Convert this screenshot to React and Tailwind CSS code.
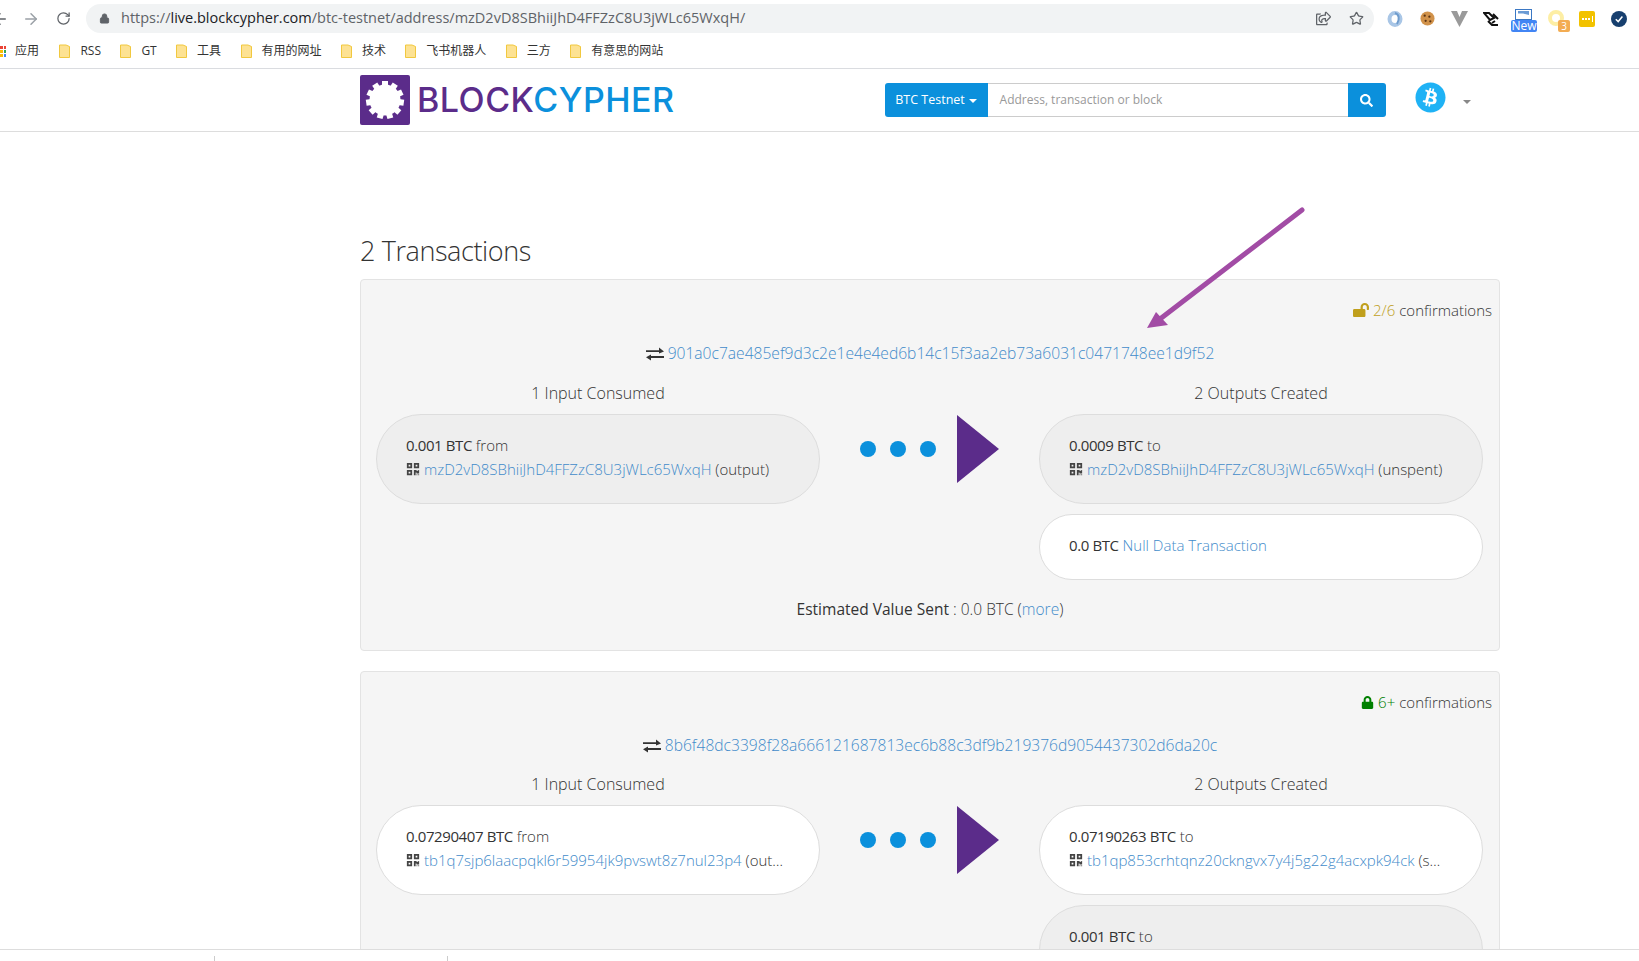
import { ArrowLeft, ArrowRight, RotateCw, Lock, Star } from 'lucide-react';
import { FaBitcoin, FaSearch, FaQrcode, FaLock, FaLockOpen, FaRegShareSquare } from 'react-icons/fa';

const FONT = { fontFamily: '"Open Sans", "Noto Sans CJK SC", sans-serif' };

const bookmarks = ['RSS', 'GT', '工具', '有用的网址', '技术', '飞书机器人', '三方', '有意思的网站'];

function Folder() {
  return (
    <svg width="11" height="14" viewBox="0 0 11 14">
      <path d="M0.5 1 H7 L10.5 2.5 V13.5 H0.5 Z" fill="#fde293" stroke="#f1c83f" />
    </svg>
  );
}

function Gear() {
  const teeth = [0, 1, 2, 3, 4, 5, 6, 7, 8, 9, 10];
  return (
    <svg width="50" height="50" viewBox="0 0 50 50" className="shrink-0">
      <rect width="50" height="50" rx="2" fill="#5b2c8a" />
      <circle cx="25" cy="25" r="15.5" fill="#fff" />
      {teeth.map(i => (
        <rect key={i} x="22" y="6" width="6" height="9" fill="#fff" transform={`rotate(${(i * 360) / 11} 25 25)`} />
      ))}
    </svg>
  );
}

function TransferIcon() {
  return (
    <svg width="18" height="14" viewBox="0 0 18 14" className="shrink-0">
      <path d="M0 3.2 H13 V0.6 L18 4.4 L13 6.6 V5 H0 Z" fill="#333" />
      <path d="M18 9 H5 V7.4 L0 10.2 L5 13.6 V11 H18 Z" fill="#333" />
    </svg>
  );
}

function Extensions() {
  return (
    <div className="flex items-center h-full">
      <div className="w-8 flex justify-center">
        <svg width="16" height="16" viewBox="0 0 16 16">
          <ellipse cx="8" cy="8" rx="5.5" ry="6" fill="none" stroke="#a9c6e6" strokeWidth="4" />
          <path d="M8 2 C12 3 13 8 10 13" fill="none" stroke="#6f9ccd" strokeWidth="2" />
        </svg>
      </div>
      <div className="w-8 flex justify-center">
        <svg width="15" height="15" viewBox="0 0 16 16">
          <circle cx="8" cy="8" r="7.5" fill="#d1924a" />
          <circle cx="5" cy="5" r="1.2" fill="#5b3413" />
          <circle cx="10" cy="6" r="1.2" fill="#5b3413" />
          <circle cx="6" cy="10.5" r="1.2" fill="#5b3413" />
          <circle cx="11" cy="11" r="1.2" fill="#5b3413" />
        </svg>
      </div>
      <div className="w-8 flex justify-center">
        <svg width="17" height="16" viewBox="0 0 17 16">
          <path d="M0 0 H6 L8.5 6 L11 0 H17 L8.5 16 Z" fill="#9a9a9a" />
        </svg>
      </div>
      <div className="w-8 flex justify-center">
        <svg width="16" height="14" viewBox="0 0 16 14" fill="none" stroke="#111" strokeWidth="2">
          <path d="M1 1 H6 L11 6 L7 8 Z M5 9 L9 13 H15 M10 2 L15 7 M12 9 L9 11" />
        </svg>
      </div>
      <div className="w-8 h-full flex justify-center relative">
        <svg width="17" height="11" viewBox="0 0 17 11" className="mt-[9px]">
          <rect x="0.5" y="0.5" width="16" height="10" fill="#fff" stroke="#3b78c4" />
          <path d="M3 2 H14 V6 L8 4.5 H3 Z" fill="#6a9bd4" />
        </svg>
        <span className="absolute left-[4px] top-[20px] w-[26px] h-[12px] rounded-[2px] bg-[#4285f4] text-white text-[12px] leading-[12px] text-center">New</span>
      </div>
      <div className="w-8 h-full relative">
        <div className="absolute left-[9px] top-[10px] w-4 h-4 rounded-full border-[4px] border-[#fdeea4]" />
        <span className="absolute left-[19px] top-[20px] w-3 h-3 rounded-[2px] bg-[#f3ac52] text-white text-[10px] leading-[12px] text-center">3</span>
      </div>
      <div className="w-8 flex justify-center">
        <div className="w-4 h-4 rounded-[2px] bg-[#f2c200] flex items-center justify-center gap-[1px]">
          <span className="w-[2px] h-[2px] bg-white" />
          <span className="w-[2px] h-[2px] bg-white" />
          <span className="w-[2px] h-[2px] bg-white" />
          <span className="w-[1px] h-[6px] ml-[1px] bg-white" />
        </div>
      </div>
      <div className="w-8 flex justify-center">
        <svg width="16" height="16" viewBox="0 0 16 16">
          <circle cx="8" cy="8" r="8" fill="#173f6e" />
          <path d="M4.8 8.2 L7.2 10.6 L11.4 5.6" fill="none" stroke="#fff" strokeWidth="1.5" />
        </svg>
      </div>
    </div>
  );
}

function BrowserChrome() {
  return (
    <div className="h-[69px] shrink-0 border-b border-[#dadce0] bg-white">
      <div className="h-[37px] flex items-center">
        <div className="w-[86px] shrink-0 relative h-full flex items-center">
          <ArrowLeft size={18} className="-ml-[9px] text-[#5f6368]" />
          <ArrowRight size={18} className="ml-[13px] text-[#9aa0a6]" />
          <RotateCw size={15} className="ml-[16px] text-[#5f6368]" />
        </div>
        <div className="w-[1288px] h-[29px] shrink-0 rounded-full bg-[#f1f3f4] flex items-center pl-[13px] pr-[10px]">
          <Lock size={11} className="text-[#5f6368] mr-[11px] fill-[#5f6368]" />
          <span className="text-[14.5px] text-[#202124] leading-none">
            <span className="text-[#5f6368]">https://</span>live.blockcypher.com<span className="text-[#5f6368]">/btc-testnet/address/mzD2vD8SBhiiJhD4FFZzC8U3jWLc65WxqH/</span>
          </span>
          <FaRegShareSquare size={15} className="ml-auto text-[#5f6368]" />
          <Star size={15} className="ml-[18px] text-[#5f6368]" />
        </div>
        <div className="ml-[5px] h-full">
          <Extensions />
        </div>
      </div>
      <div className="h-[28px] flex items-center text-[12px] text-[#333] overflow-hidden">
        <div className="flex items-center">
          <div className="w-[6px] h-[11px] mr-[9px] grid grid-cols-2 gap-[1px]">
            <span className="bg-[#ea4335]" />
            <span className="bg-[#ea4335]" />
            <span className="bg-[#fbbc04]" />
            <span className="bg-[#34a853]" />
            <span className="bg-[#fbbc04]" />
            <span className="bg-[#4285f4]" />
          </div>
          <span className="mr-[1px]">应用</span>
        </div>
        {bookmarks.map(b => (
          <div key={b} className="flex items-center gap-[10px] ml-[19.4px]">
            <Folder />
            <span>{b}</span>
          </div>
        ))}
      </div>
    </div>
  );
}

function SiteHeader() {
  return (
    <div className="h-[63px] shrink-0 border-b border-[#ddd] flex items-center pl-[360px]">
      <Gear />
      <div className="ml-[7px] text-[34px] font-medium leading-none tracking-[0.5px]" style={{ fontFamily: 'Inter, sans-serif' }}>
        <span className="text-[#5b2c8a]">BLOCK</span>
        <span className="text-[#0b90dc]">CYPHER</span>
      </div>
      <div className="ml-[210px] flex h-[34px] w-[501px]">
        <button className="w-[103px] rounded-l-[3px] bg-[#0b90dc] text-white text-[12.5px] flex items-center justify-center gap-[4px]">
          BTC Testnet
          <span className="border-x-[4px] border-t-[4px] border-x-transparent border-t-white mt-[1px]" />
        </button>
        <div className="flex-1 border-y border-[#ccc] pl-[12px] flex items-center text-[12px] text-[#999]">Address, transaction or block</div>
        <button className="w-[38px] rounded-r-[3px] bg-[#0b90dc] text-white flex items-center justify-center">
          <FaSearch size={13} />
        </button>
      </div>
      <FaBitcoin size={31} className="ml-[29px] -mt-[5px] text-[#1fb2f5]" />
      <span className="ml-[17px] mt-[3px] border-x-[4px] border-t-[4px] border-x-transparent border-t-[#888]" />
    </div>
  );
}

function Pill({ amount, word, address, note, link, active }) {
  return (
    <div className={`rounded-[45px] border border-[#ddd] pl-[29px] pr-[34px] pt-[18px] pb-[22px] text-[15px] leading-[24px] ${active ? 'bg-[#eee]' : 'bg-white'}`}>
      <div className="truncate">
        <span className="font-normal text-[#333] tracking-[-0.4px]">{amount} BTC</span> {word}
        {link && <a className="text-[#428bca]"> {link}</a>}
      </div>
      {address && (
        <div className="truncate">
          <FaQrcode size={14} className="inline-block text-[#444] mr-[4px] -mt-[4px]" />
          <a className="text-[#428bca]">{address}</a> {note}
        </div>
      )}
    </div>
  );
}

function Flow() {
  return (
    <div className="flex items-center h-[70px] pl-[40px] gap-[14px]">
      <span className="w-4 h-4 rounded-full bg-[#0b90dc]" />
      <span className="w-4 h-4 rounded-full bg-[#0b90dc]" />
      <span className="w-4 h-4 rounded-full bg-[#0b90dc]" />
      <svg width="42" height="68" viewBox="0 0 42 68" className="ml-[7px]">
        <path d="M0 0 L42 34 L0 68 Z" fill="#5b2c8a" />
      </svg>
    </div>
  );
}

function TxCard({ status, hash, inputs, outputs, footer, labelGap }) {
  return (
    <div className="rounded-[4px] border border-[#e3e3e3] bg-[#f5f5f5] pt-[19px] px-[15px] pb-[30px] text-[15px] font-light text-[#333]">
      <div className="h-[22px] flex items-center justify-end gap-[4px] leading-[22px] -mr-[8px]">{status}</div>
      <div className="mt-[22px] h-[22px] flex items-center justify-center gap-[4px] text-[15.6px]">
        <TransferIcon />
        <a className="text-[#428bca]">{hash}</a>
      </div>
      <div className={`${labelGap} grid grid-cols-[444px_219px_444px]`}>
        <div>
          <div className="h-[22px] leading-[22px] text-center text-[16px]">1 Input Consumed</div>
          <div className="mt-[10px] flex flex-col gap-[10px]">{inputs}</div>
        </div>
        <div className="pt-[32px]">
          <Flow />
        </div>
        <div>
          <div className="h-[22px] leading-[22px] text-center text-[16px]">2 Outputs Created</div>
          <div className="mt-[10px] flex flex-col gap-[10px]">{outputs}</div>
        </div>
      </div>
      {footer}
    </div>
  );
}

export default function App() {
  return (
    <div className="h-screen overflow-hidden flex flex-col bg-white relative" style={FONT}>
      <BrowserChrome />
      <SiteHeader />
      <div className="flex-1 overflow-hidden pl-[360px] w-[1500px]">
        <h2 className="mt-[99px] mb-[8px] h-[40px] text-[27px] leading-[40px] font-light text-[#333] tracking-[-0.4px]">2 Transactions</h2>
        <div className="flex flex-col gap-[20px]">
          <TxCard
            labelGap="mt-[17px]"
            status={<>
              <FaLockOpen size={16} className="text-[#c09f1c]" />
              <span className="text-[#c09f1c]">2/6</span> confirmations
            </>}
            hash="901a0c7ae485ef9d3c2e1e4e4ed6b14c15f3aa2eb73a6031c0471748ee1d9f52"
            inputs={<Pill active amount="0.001" word="from" address="mzD2vD8SBhiiJhD4FFZzC8U3jWLc65WxqH" note="(output)" />}
            outputs={<>
              <Pill active amount="0.0009" word="to" address="mzD2vD8SBhiiJhD4FFZzC8U3jWLc65WxqH" note="(unspent)" />
              <Pill amount="0.0" link="Null Data Transaction" />
            </>}
            footer={
              <div className="mt-[18px] h-[22px] leading-[22px] text-center text-[15.5px]">
                <span className="font-normal">Estimated Value Sent</span> : 0.0 BTC (<a className="text-[#428bca]">more</a>)
              </div>
            }
          />
          <TxCard
            labelGap="mt-[16px]"
            status={<>
              <FaLock size={13} className="text-[#008000]" />
              <span className="text-[#008000]">6+</span> confirmations
            </>}
            hash="8b6f48dc3398f28a666121687813ec6b88c3df9b219376d9054437302d6da20c"
            inputs={<Pill amount="0.07290407" word="from" address="tb1q7sjp6laacpqkl6r59954jk9pvswt8z7nul23p4" note="(output)" />}
            outputs={<>
              <Pill amount="0.07190263" word="to" address="tb1qp853crhtqnz20ckngvx7y4j5g22g4acxpk94ck" note="(spent)" />
              <Pill active amount="0.001" word="to" address="tb1q7sjp6laacpqkl6r59954jk9pvswt8z7nul23p4" note="(output)" />
            </>}
          />
        </div>
      </div>
      <div className="h-[12px] shrink-0 border-t border-[#ddd] bg-white relative z-10 flex items-end">
        <span className="ml-[214px] w-px h-[5px] bg-[#ccc]" />
        <span className="ml-[232px] w-px h-[5px] bg-[#ccc]" />
      </div>
      {/* annotation arrow drawn over the page */}
      <svg width="230" height="140" viewBox="0 0 230 140" className="absolute left-[1130px] top-[200px] pointer-events-none">
        <path d="M172 10 L30 119" stroke="#a24ca5" strokeWidth="5" strokeLinecap="round" fill="none" />
        <path d="M17 128 L26 112 L38 125 Z" fill="#a24ca5" />
      </svg>
    </div>
  );
}
